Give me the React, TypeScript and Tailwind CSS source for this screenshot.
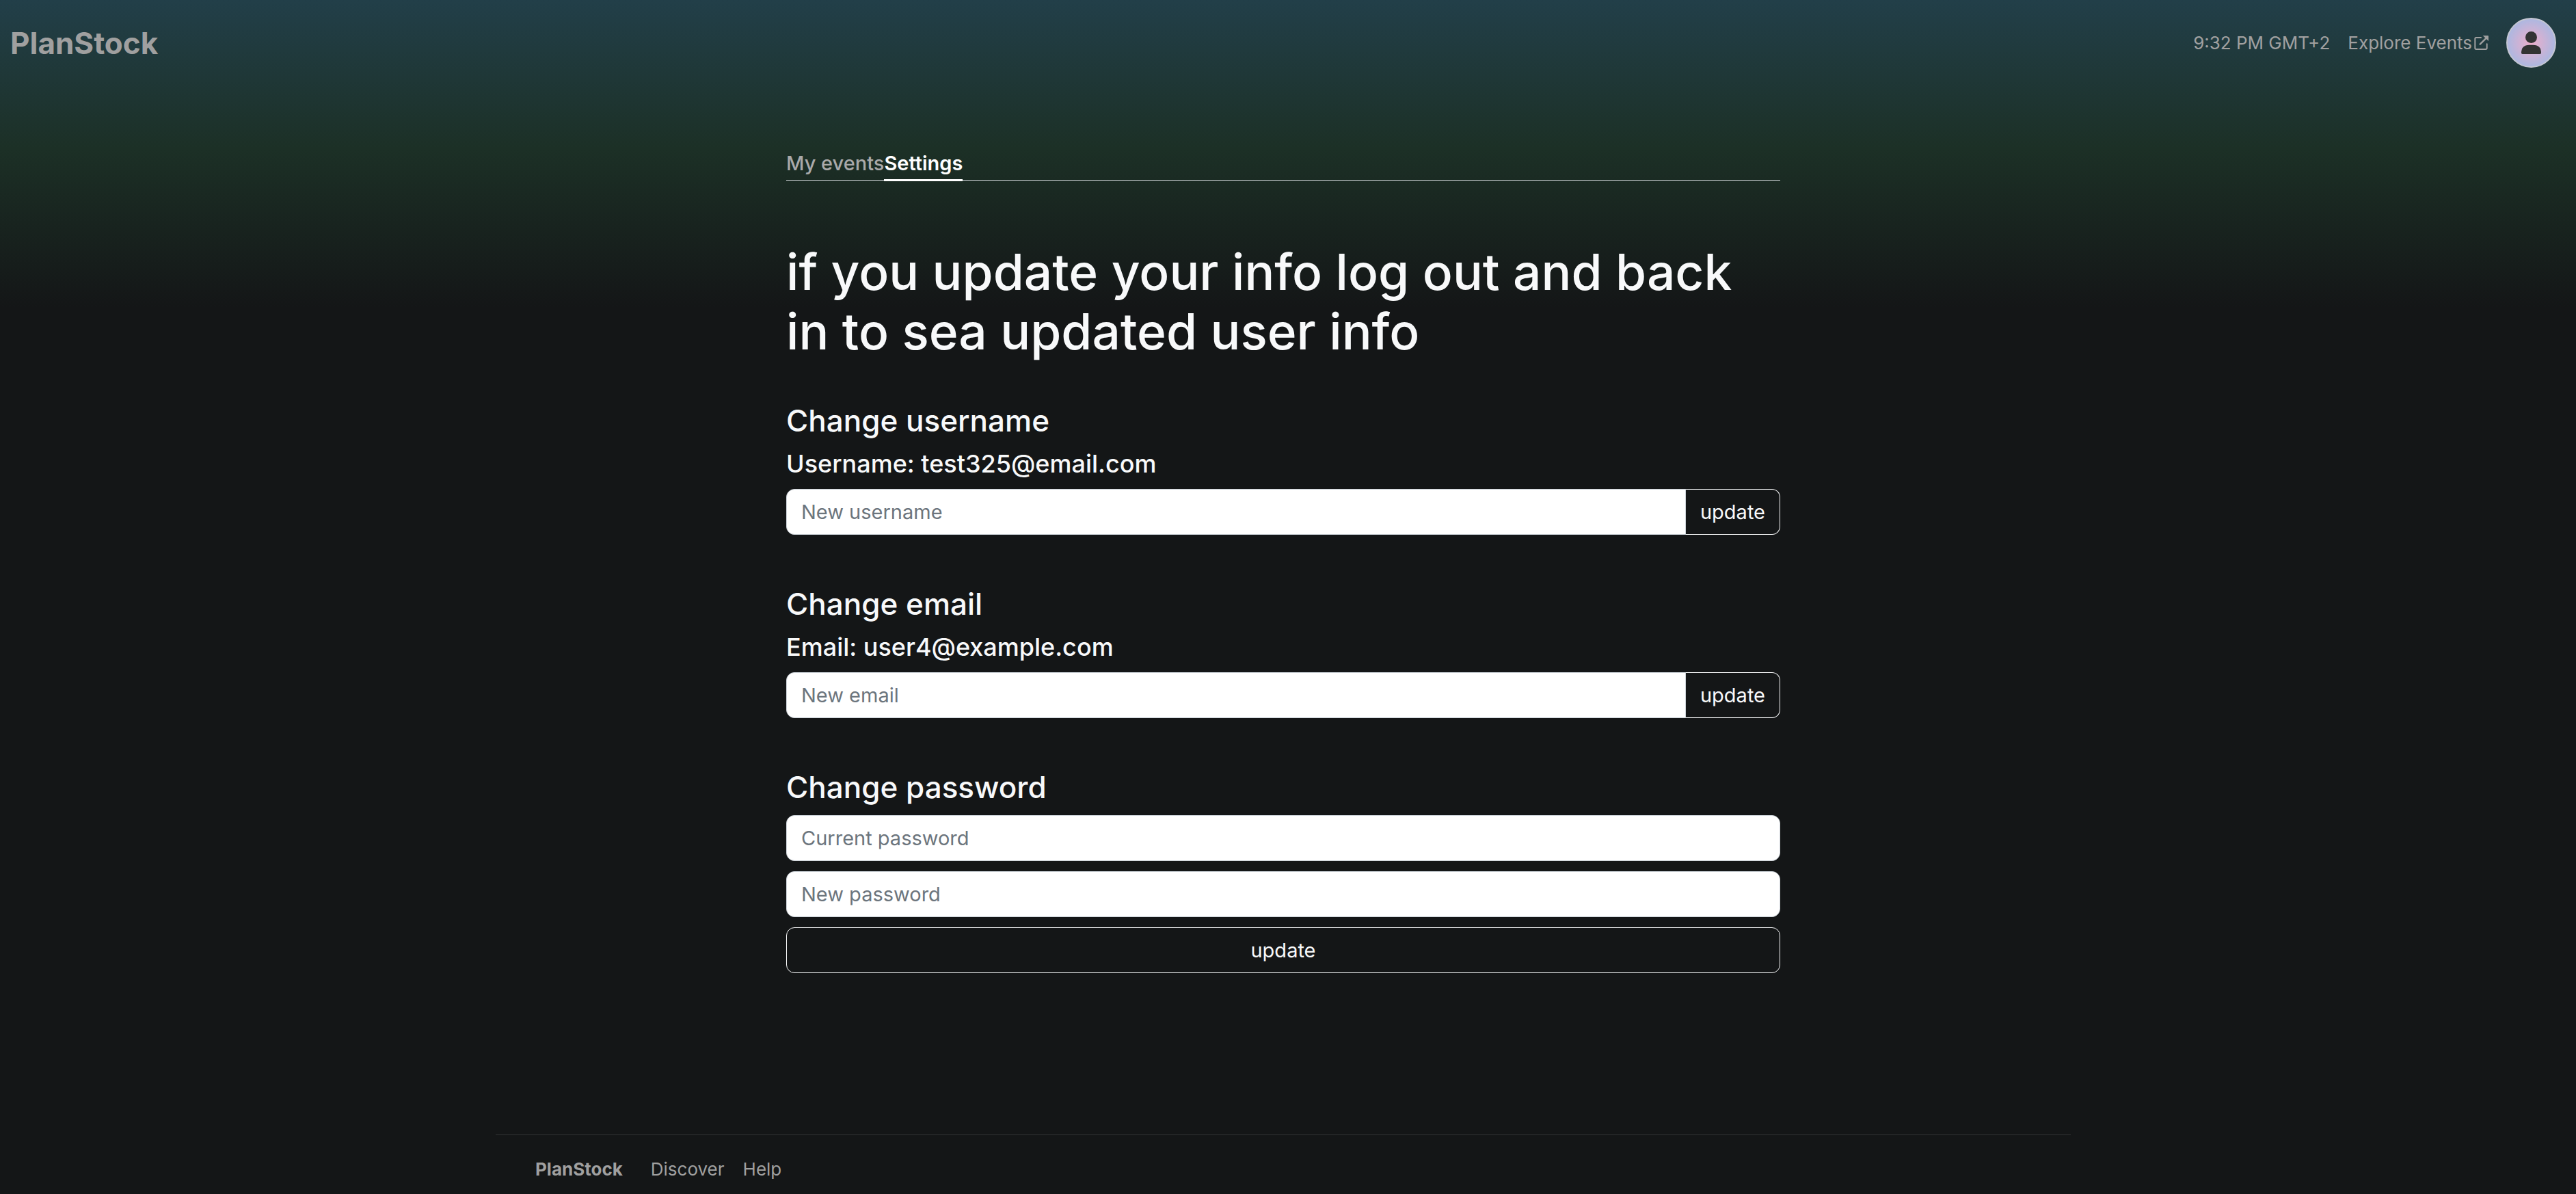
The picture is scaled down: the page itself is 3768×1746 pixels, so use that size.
import type { ReactNode } from "react";

function ExternalLinkIcon() {
  return (
    <svg viewBox="0 0 63 63" className="size-[21px] shrink-0" fill="none" aria-hidden="true">
      <path
        d="M30 9H9q-5 0-5 5v41q0 5 5 5h42q5 0 5-5V37"
        stroke="currentColor"
        strokeWidth="6"
        strokeLinecap="round"
      />
      <path d="M26 38L51 13" stroke="currentColor" strokeWidth="7" strokeLinecap="round" />
      <path d="M38 0H60q3 0 3 3V24z" fill="currentColor" />
    </svg>
  );
}

function PersonIcon() {
  return (
    <svg viewBox="0 0 87 99" className="h-[33px] w-[29px]" fill="#333333" aria-hidden="true">
      <circle cx="43.5" cy="25.5" r="25.5" />
      <path d="M0 94Q0 59 35 59H52Q87 59 87 94q0 5-5 5H5q-5 0-5-5z" />
    </svg>
  );
}

const fieldClass =
  "h-[67px] min-w-0 border border-[#ced4da] bg-white px-[21px] text-[29px] leading-[44px] text-[#212529] placeholder:text-[#6c757d] placeholder:opacity-100 focus:outline-none";
const buttonClass =
  "h-[67px] cursor-pointer border border-[#f8f9fa] px-[21px] text-[29px] leading-[44px] text-[#f8f9fa]";

function Section({ title, children }: { title: string; children: ReactNode }) {
  return (
    <form className="flex flex-col gap-[15px]" onSubmit={(e) => e.preventDefault()}>
      <h2 className="text-[44px] leading-[52px] font-medium">{title}</h2>
      {children}
    </form>
  );
}

function InlineField({ current, label, type }: { current: string; label: string; type: string }) {
  return (
    <>
      <h3 className="text-[36px] leading-[44px] font-medium">{current}</h3>
      <div className="flex">
        <input
          type={type}
          aria-label={label}
          placeholder={label}
          className={`${fieldClass} flex-1 rounded-l-[12px]`}
        />
        <button type="submit" className={`${buttonClass} -ml-px rounded-r-[12px] border-l-[#ced4da]`}>
          update
        </button>
      </div>
    </>
  );
}

export default function App() {
  return (
    <div className="flex min-h-screen flex-col bg-[#141617] bg-[linear-gradient(180deg,#223f49_0px,#1c3026_218px,#141617_450px)] pr-[14px] font-[Inter,sans-serif] text-[#f8f9fa]">
      <header className="flex items-center justify-between px-[15px] py-[26px] text-[#a0a0a0]">
        <a href="#" className="text-[44px] leading-[52px] font-bold">
          PlanStock
        </a>
        <div className="flex items-center gap-[26px] text-[26px] leading-[39px]">
          <span>9:32 PM GMT+2</span>
          <a href="#" className="flex items-center gap-[3px]">
            Explore Events
            <ExternalLinkIcon />
          </a>
          <button
            type="button"
            aria-label="Account"
            className="flex size-[73px] cursor-pointer items-center justify-center rounded-full border-2 border-[#c4c6d2] bg-[radial-gradient(circle,#eeaeca_0%,#94bbe9_100%)]"
          >
            <PersonIcon />
          </button>
        </div>
      </header>

      <main className="mx-auto w-full max-w-[1454px] pt-[92px] pb-[75px]">
        <nav className="flex border-b border-[#dee2e6] text-[29px] leading-[44px]">
          <a href="#" className="-mb-[2px] border-b-3 border-transparent pb-px font-medium text-[#a9a9a9]">
            My events
          </a>
          <a
            href="#"
            aria-current="page"
            className="-mb-[2px] border-b-3 border-white pb-px font-semibold text-white"
          >
            Settings
          </a>
        </nav>

        <h1 className="mt-[90px] text-[73px] leading-[87px] font-medium">
          if you update your info log out and back in to sea updated user info
        </h1>

        <div className="mt-[61px] flex flex-col gap-[75px]">
          <Section title="Change username">
            <InlineField current="Username: test325@email.com" label="New username" type="text" />
          </Section>
          <Section title="Change email">
            <InlineField current="Email: user4@example.com" label="New email" type="email" />
          </Section>
          <Section title="Change password">
            <input
              type="password"
              aria-label="Current password"
              placeholder="Current password"
              className={`${fieldClass} w-full rounded-[12px]`}
            />
            <input
              type="password"
              aria-label="New password"
              placeholder="New password"
              className={`${fieldClass} w-full rounded-[12px]`}
            />
            <button type="submit" className={`${buttonClass} w-full rounded-[12px]`}>
              update
            </button>
          </Section>
        </div>
      </main>

      <footer className="mx-auto mt-auto flex w-full max-w-[2304px] items-center border-t border-[#333536] px-[58px] pt-[30px] pb-[17px] text-[26px] leading-[39px] text-[#a0a0a0]">
        <a href="#" className="mr-[41px] font-bold">
          PlanStock
        </a>
        <nav className="flex gap-[27px]">
          <a href="#">Discover</a>
          <a href="#">Help</a>
        </nav>
      </footer>
    </div>
  );
}
